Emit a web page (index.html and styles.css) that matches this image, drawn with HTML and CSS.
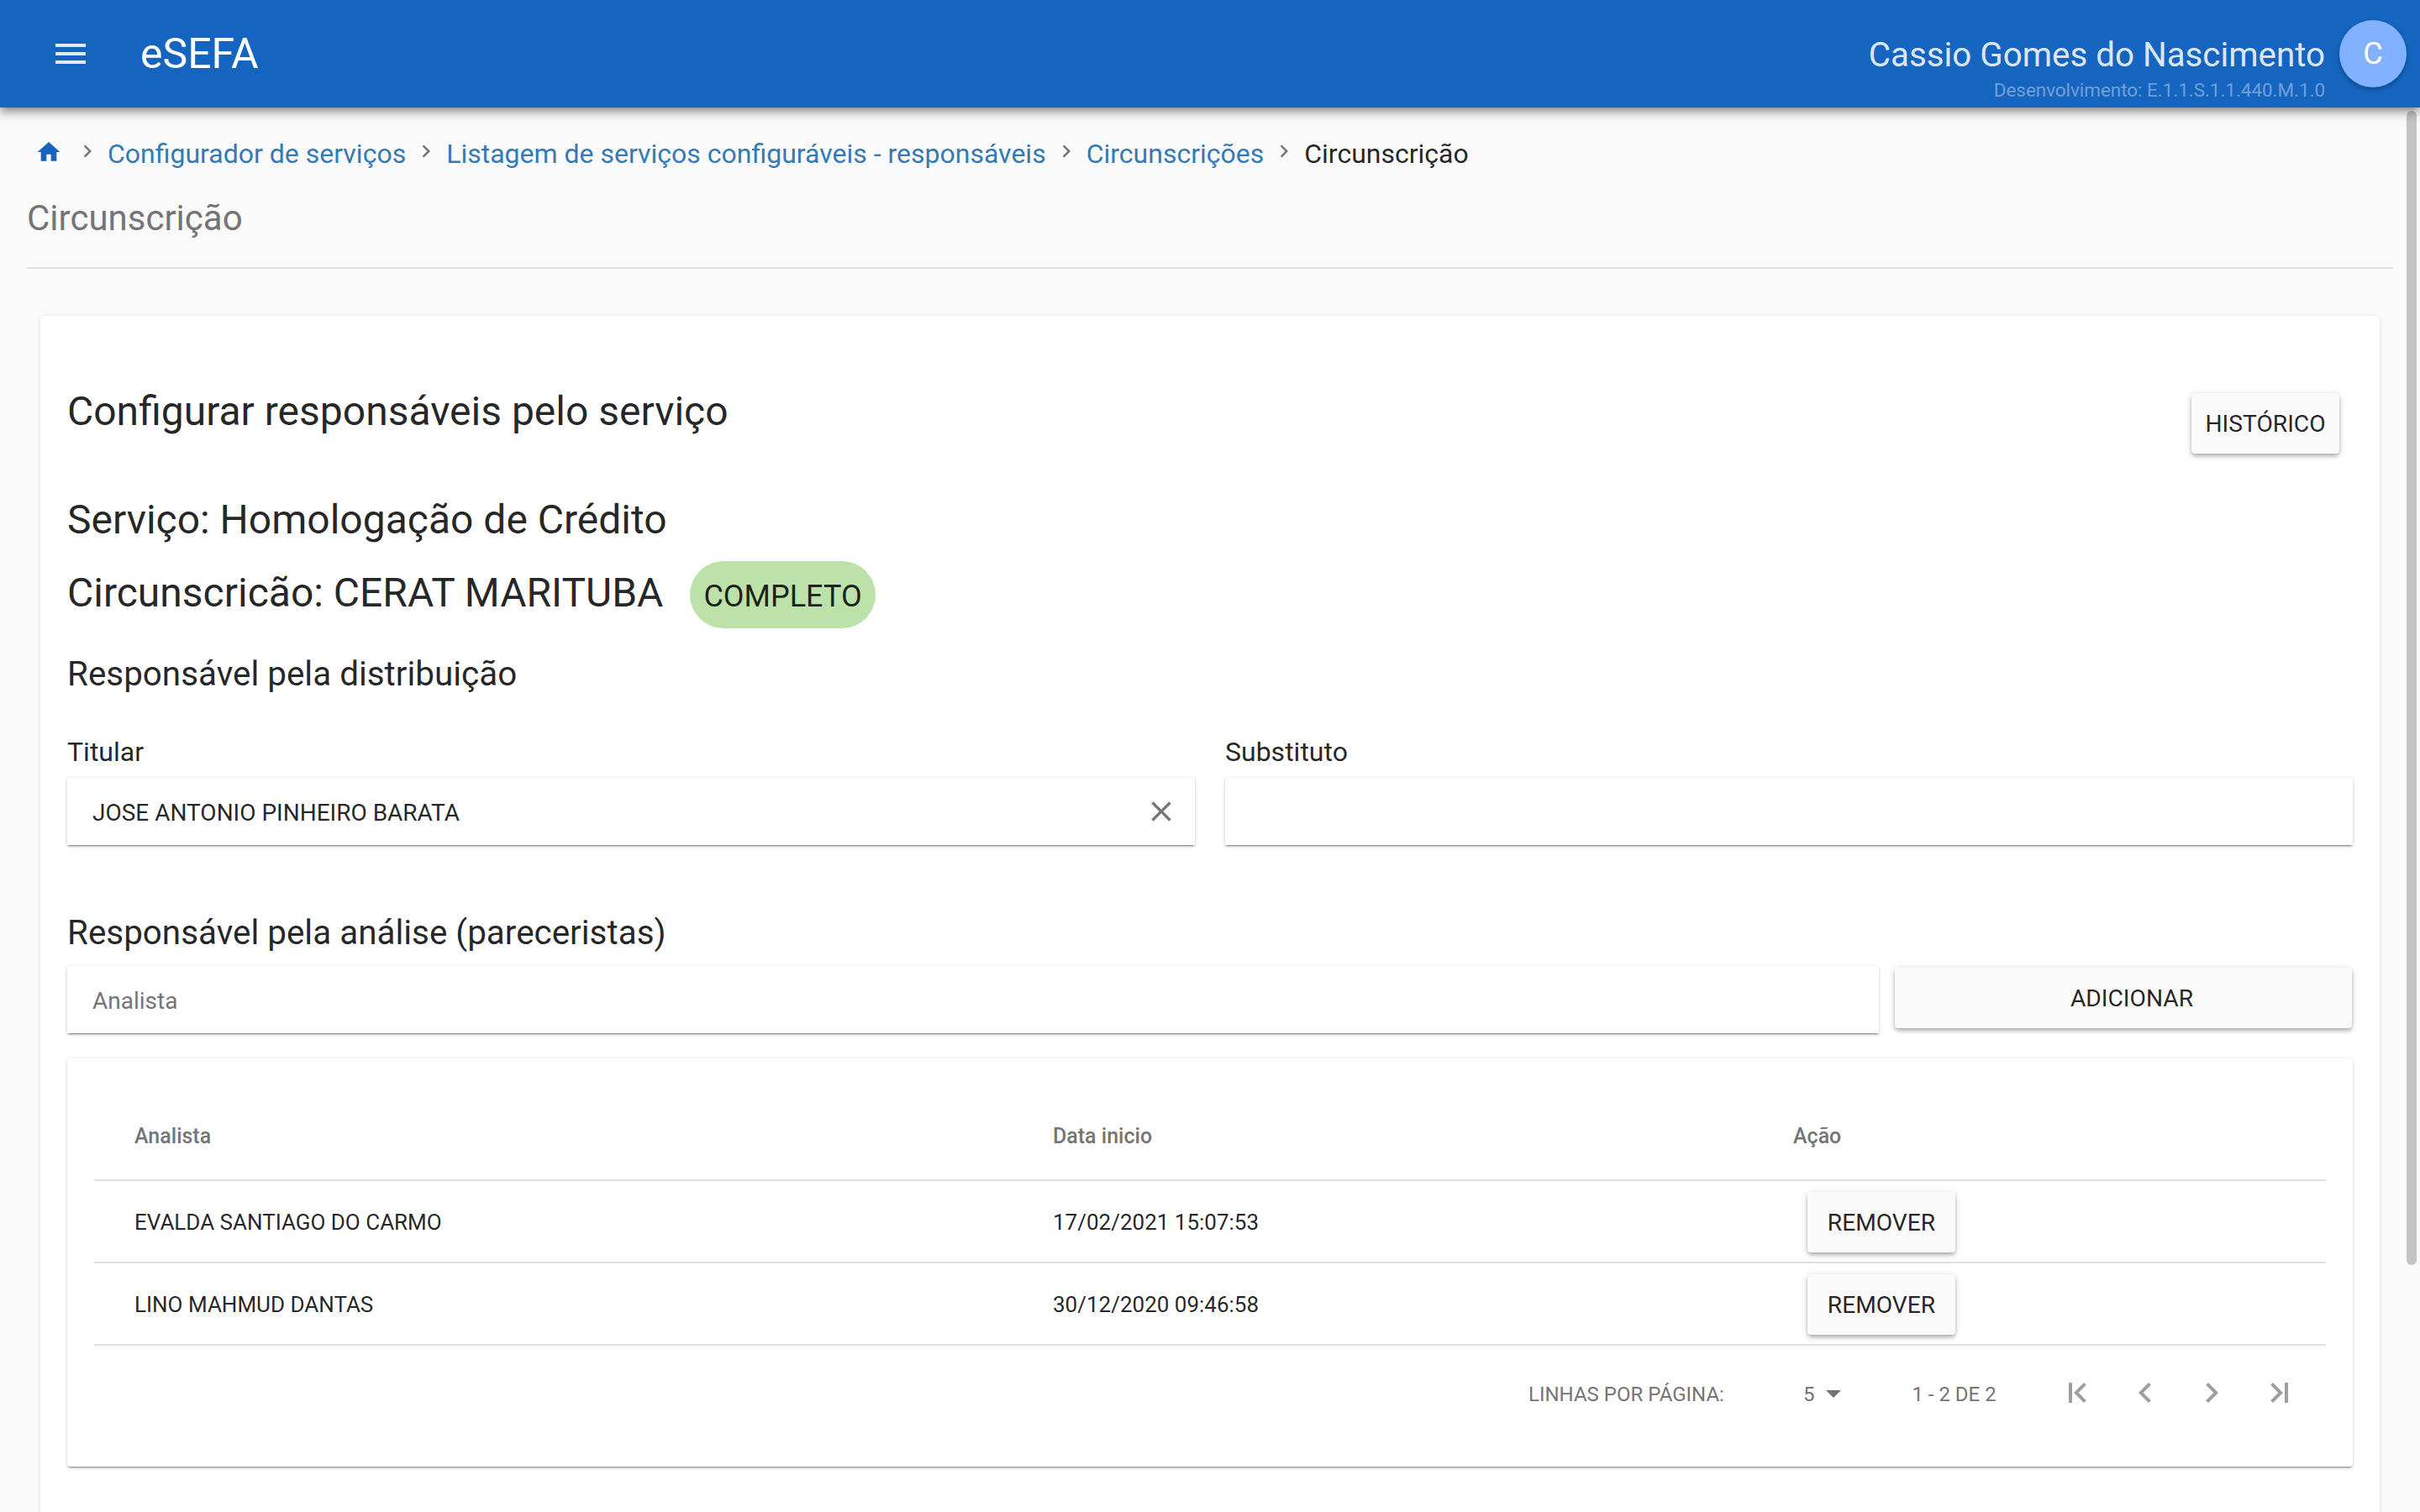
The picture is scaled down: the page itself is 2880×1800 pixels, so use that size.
FILE: index.html
```html
<!DOCTYPE html>
<html lang="pt-BR">
<head>
  <meta charset="UTF-8" />
  <title>eSEFA</title>
  <link rel="stylesheet" href="styles.css">
</head>
<body>

  <header class="app-bar">
    <button class="menu-btn" aria-label="Menu">
      <svg class="icon-48" viewBox="0 0 24 24"><path d="M3 18h18v-2H3v2zm0-5h18v-2H3v2zm0-7v2h18V6H3z"/></svg>
    </button>
    <div class="brand">eSEFA</div>
    <div class="user">
      <div class="user-name">Cassio Gomes do Nascimento</div>
      <div class="user-env">Desenvolvimento: E.1.1.S.1.1.440.M.1.0</div>
    </div>
    <div class="avatar">C</div>
  </header>

  <main class="page">
    <nav class="breadcrumbs">
      <a class="crumb-home" href="#"><svg class="icon-32" viewBox="0 0 24 24"><path d="M10 20v-6h4v6h5v-8h3L12 3 2 12h3v8z"/></svg></a>
      <svg class="crumb-sep" viewBox="0 0 24 24"><path d="M8.59 16.59L13.17 12 8.59 7.41 10 6l6 6-6 6z"/></svg>
      <a href="#">Configurador de serviços</a>
      <svg class="crumb-sep" viewBox="0 0 24 24"><path d="M8.59 16.59L13.17 12 8.59 7.41 10 6l6 6-6 6z"/></svg>
      <a href="#">Listagem de serviços configuráveis - responsáveis</a>
      <svg class="crumb-sep" viewBox="0 0 24 24"><path d="M8.59 16.59L13.17 12 8.59 7.41 10 6l6 6-6 6z"/></svg>
      <a href="#">Circunscrições</a>
      <svg class="crumb-sep" viewBox="0 0 24 24"><path d="M8.59 16.59L13.17 12 8.59 7.41 10 6l6 6-6 6z"/></svg>
      <span class="crumb-current">Circunscrição</span>
    </nav>

    <h1 class="page-title">Circunscrição</h1>

    <section class="card">
      <div class="title-row">
        <h2 class="heading-lg">Configurar responsáveis pelo serviço</h2>
        <button class="btn btn-history">HISTÓRICO</button>
      </div>

      <h3 class="heading-lg">Serviço: Homologação de Crédito</h3>
      <div class="circ-row">
        <h3 class="heading-lg">Circunscricão: CERAT MARITUBA</h3>
        <span class="chip">COMPLETO</span>
      </div>

      <h4 class="heading-md dist-title">Responsável pela distribuição</h4>
      <div class="fields">
        <div>
          <label class="field-label">Titular</label>
          <div class="input">
            <span class="input-value">JOSE ANTONIO PINHEIRO BARATA</span>
            <svg class="icon-40 input-clear" viewBox="0 0 24 24"><path d="M19 6.41L17.59 5 12 10.59 6.41 5 5 6.41 10.59 12 5 17.59 6.41 19 12 13.41 17.59 19 19 17.59 13.41 12z"/></svg>
          </div>
        </div>
        <div>
          <label class="field-label">Substituto</label>
          <div class="input"></div>
        </div>
      </div>

      <h4 class="heading-md analysis-title">Responsável pela análise (pareceristas)</h4>
      <div class="add-row">
        <div class="input"><span class="input-placeholder">Analista</span></div>
        <button class="btn btn-add">ADICIONAR</button>
      </div>

      <div class="table-card">
        <table class="data-table">
          <thead>
            <tr>
              <th class="col-name">Analista</th>
              <th class="col-date">Data inicio</th>
              <th>Ação</th>
            </tr>
          </thead>
          <tbody>
            <tr>
              <td>EVALDA SANTIAGO DO CARMO</td>
              <td>17/02/2021 15:07:53</td>
              <td><button class="btn btn-remove">REMOVER</button></td>
            </tr>
            <tr>
              <td>LINO MAHMUD DANTAS</td>
              <td>30/12/2020 09:46:58</td>
              <td><button class="btn btn-remove">REMOVER</button></td>
            </tr>
          </tbody>
        </table>

        <div class="table-footer">
          <span class="rows-label">LINHAS POR PÁGINA:</span>
          <span class="rows-select">5<i class="caret"></i></span>
          <span class="rows-range">1 - 2 DE 2</span>
          <div class="pager">
            <svg class="icon-48" viewBox="0 0 24 24"><path d="M16.41 16.59L11.82 12l4.59-4.59L15 6l-6 6 6 6zM6 6h2v12H6z"/></svg>
            <svg class="icon-48" viewBox="0 0 24 24"><path d="M15.41 16.59L10.83 12l4.58-4.59L14 6l-6 6 6 6z"/></svg>
            <svg class="icon-48" viewBox="0 0 24 24"><path d="M8.59 16.59L13.17 12 8.59 7.41 10 6l6 6-6 6z"/></svg>
            <svg class="icon-48" viewBox="0 0 24 24"><path d="M7.59 7.41L12.18 12l-4.59 4.59L9 18l6-6-6-6zM16 6h2v12h-2z"/></svg>
          </div>
        </div>
      </div>
    </section>
  </main>

  <div class="scroll-thumb"></div>

</body>
</html>
```

FILE: styles.css
```css
* {
  box-sizing: border-box;
}
html, body {
  height: 100%;
}
body {
  margin: 0;
  display: flex;
  flex-direction: column;
  overflow: hidden;
  font-family: Roboto, sans-serif;
  background-color: #fafafa;
  color: rgba(0, 0, 0, 0.87);
}
h1, h2, h3, h4 {
  margin: 0;
  font-weight: 400;
}
button {
  font-family: inherit;
  border: 0;
  cursor: pointer;
}
svg {
  display: block;
  fill: currentColor;
}
.icon-32 { width: 32px; height: 32px; }
.icon-40 { width: 40px; height: 40px; }
.icon-48 { width: 48px; height: 48px; }

/* top bar */
.app-bar {
  position: relative;
  z-index: 2;
  flex: 0 0 128px;
  display: flex;
  align-items: center;
  padding: 0 16px 0 60px;
  background-color: #1565c0;
  color: #fff;
  box-shadow: 0 4px 8px -2px rgba(0, 0, 0, 0.3), 0 8px 10px 1px rgba(0, 0, 0, 0.14), 0 3px 14px 2px rgba(0, 0, 0, 0.12);
}
.menu-btn {
  padding: 0;
  background: none;
  color: rgba(255, 255, 255, 0.87);
}
.brand {
  margin-left: 59px;
  font-size: 50px;
}
.user {
  margin-left: auto;
  margin-right: 17px;
  text-align: right;
}
.user-name {
  margin-top: 36px;
  font-size: 40.3px;
  line-height: 48px;
  color: rgba(255, 255, 255, 0.87);
}
.user-env {
  margin-top: 2px;
  font-size: 22.4px;
  line-height: 30px;
  color: rgba(255, 255, 255, 0.4);
}
.avatar {
  width: 80px;
  height: 80px;
  border-radius: 50%;
  display: flex;
  align-items: center;
  justify-content: center;
  background-color: #82b1ff;
  font-size: 36px;
  box-shadow: 0 3px 6px rgba(0, 0, 0, 0.25);
}

/* page area, the scrollbar thumb is drawn over it */
.page {
  flex: 1;
  overflow: hidden;
  padding: 30px 32px 0 32px;
}
.scroll-thumb {
  position: absolute;
  top: 132px;
  right: 4px;
  width: 12px;
  height: 1374px;
  border-radius: 6px;
  background-color: #c4c4c4;
}

.breadcrumbs {
  display: flex;
  align-items: center;
  height: 46px;
  font-size: 32px;
}
.breadcrumbs a,
.crumb-current {
  padding-top: 4px;
}
.breadcrumbs a {
  color: #337ab7;
  text-decoration: none;
}
.breadcrumbs .crumb-home {
  margin: 0 6px 0 10px;
  padding-top: 0;
  color: #1565c0;
}
.crumb-sep {
  width: 30px;
  height: 30px;
  margin: -2px 9px 0;
  color: #757575;
}
.crumb-current {
  color: rgba(0, 0, 0, 0.87);
}

.page-title {
  height: 116px;
  padding-top: 31px;
  border-bottom: 2px solid #e0e0e0;
  font-size: 42px;
  line-height: 50px;
  color: #757575;
}

/* main card */
.card {
  margin: 56px 16px 0 16px;
  min-height: 1700px;
  padding: 0 32px;
  border-radius: 4px;
  background-color: #fff;
  box-shadow: 0 1px 5px rgba(0, 0, 0, 0.12);
}
.title-row {
  display: flex;
  justify-content: space-between;
  align-items: flex-start;
  height: 211px;
  padding-top: 82px;
}
.heading-lg {
  font-size: 48px;
  line-height: 64px;
}
.heading-md {
  font-size: 40.4px;
  line-height: 56px;
}
.circ-row {
  display: flex;
  align-items: flex-start;
  height: 107px;
  margin-top: 17px;
}
.circ-row .heading-lg {
  margin-top: 6px;
}
.chip {
  height: 80px;
  margin-left: 32px;
  padding: 3px 16px 0;
  display: flex;
  align-items: center;
  border-radius: 40px;
  background-color: #bce2aa;
  font-size: 36px;
}
.dist-title {
  margin-bottom: 44px;
}

.fields {
  display: grid;
  grid-template-columns: 1342px 1342px;
  gap: 36px;
}
.field-label {
  display: block;
  height: 51px;
  font-size: 32px;
  line-height: 40px;
}
.input {
  display: flex;
  align-items: center;
  justify-content: space-between;
  height: 80px;
  padding: 0 20px 0 30px;
  background-color: #fff;
  font-size: 28px;
  box-shadow: 0 3px 1px -2px rgba(0, 0, 0, 0.25), 0 2px 2px rgba(0, 0, 0, 0.16), 0 1px 5px rgba(0, 0, 0, 0.12);
}
.input-value,
.input-placeholder {
  padding-top: 2px;
}
.input-clear {
  color: #757575;
}
.input-placeholder {
  color: #757575;
}

.analysis-title {
  margin-top: 77px;
  margin-bottom: 11px;
}
.add-row {
  display: grid;
  grid-template-columns: 2156px 544px;
  gap: 19px;
}

.btn {
  height: 72px;
  padding-top: 2px;
  background-color: #fafafa;
  color: rgba(0, 0, 0, 0.87);
  font-size: 28.2px;
  border-radius: 4px;
  box-shadow: 0 2px 4px -1px rgba(0, 0, 0, 0.2), 0 4px 5px rgba(0, 0, 0, 0.14), 0 1px 10px rgba(0, 0, 0, 0.12);
}
.btn-history {
  width: 176px;
  margin: 10px 16px 0 0;
}
.btn-add {
  margin-top: 2px;
  padding-left: 26px;
}
.btn-remove {
  width: 176px;
  display: block;
  margin-left: 17px;
}

/* table */
.table-card {
  margin-top: 30px;
  height: 486px;
  padding: 48px 32px 0 32px;
  width: 2720px;
  border-radius: 4px;
  background-color: #fff;
  box-shadow: 0 3px 1px -2px rgba(0, 0, 0, 0.25), 0 2px 2px rgba(0, 0, 0, 0.16), 0 1px 5px rgba(0, 0, 0, 0.12);
}
.data-table {
  width: 100%;
  table-layout: fixed;
  border-collapse: collapse;
}
.col-name { width: 1093px; }
.col-date { width: 881px; }
.data-table th {
  height: 97px;
  padding: 0 0 8px 48px;
  border-bottom: 2px solid #e0e0e0;
  text-align: left;
  font-size: 25px;
  font-weight: 500;
  color: #757575;
}
.data-table td {
  height: 98px;
  padding: 2px 0 0 48px;
  border-bottom: 2px solid #e0e0e0;
  font-size: 26px;
}
.table-footer {
  display: flex;
  align-items: center;
  height: 115px;
  font-size: 24px;
  color: #757575;
}
.rows-label {
  margin-left: 1707px;
}
.rows-select {
  margin-left: 94px;
  display: flex;
  align-items: center;
}
.caret {
  width: 0;
  height: 0;
  margin-left: 14px;
  border-left: 9px solid transparent;
  border-right: 9px solid transparent;
  border-top: 9px solid #757575;
}
.rows-range {
  margin-left: 84px;
}
.pager {
  display: flex;
  gap: 31px;
  margin-left: 74px;
  margin-top: -3px;
  color: #9e9e9e;
}
```
